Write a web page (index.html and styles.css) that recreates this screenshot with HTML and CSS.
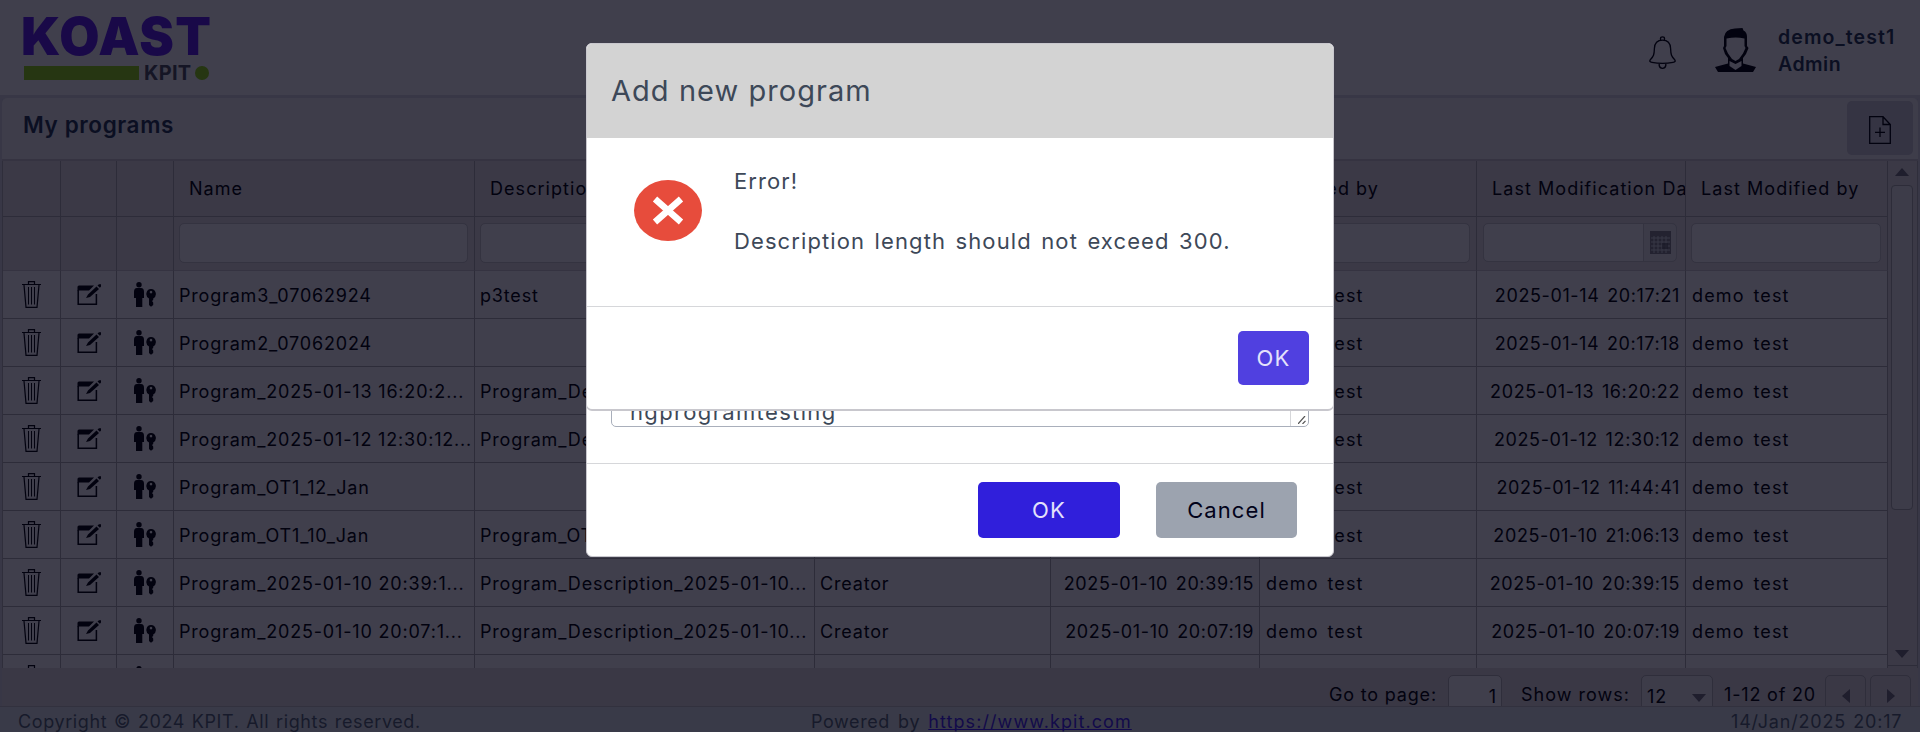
FILE: index.html
```html
<!DOCTYPE html>
<html lang="en">
<head>
<meta charset="utf-8">
<title>My programs</title>
<link rel="stylesheet" href="styles.css">
</head>
<body>
<svg class="defs" aria-hidden="true">
  <symbol id="trash" viewBox="0 0 19 27"><g fill="none" stroke="currentColor"><path d="M0 3.5H19M6.5 3V.7H12.5V3M2 4L4 26.4H15L17 4" stroke-width="1.2"/><path d="M6.5 6V23.500M9.500 6V23.500M12.500 6V23.500" stroke-width="1"/></g></symbol>
  <symbol id="edit" viewBox="0 0 24 22"><path d="M1.200 6V20.300H19.400V10" fill="none" stroke="currentColor" stroke-width="1.500"/><path d="M.5 3Q.5 1.500 2 1.500H17L12 6.500H.5ZM9 14L11 10.500L19.500 2.500L22 5L13 13ZM20.500 1.600L22 .2H24V2.500L22.900 3.800Z" fill="currentColor"/></symbol>
  <symbol id="access" viewBox="0 0 22 25"><g fill="currentColor"><circle cx="5" cy="2.700" r="2.700"/><path d="M3 6H7Q10 6 10 10V16H8.300V25H2V16H0V10Q0 6 3 6Z"/><path fill-rule="evenodd" d="M17 7a5 5 0 0 1 2.200 9.400V18L18 19L19.200 20.500V23L17 24.800L15 23V16.400A5 5 0 0 1 17 7ZM17 8.800a1.300 1.300 0 1 0 .01 0Z"/></g></symbol>
</svg>

<header class="topbar">
  <div class="logo">
    <div class="logo-name">KOAST</div>
    <div class="logo-sub"><i class="logo-bar"></i><b>KPIT</b><i class="logo-dot"></i></div>
  </div>
  <div class="user">
    <svg class="bell" viewBox="0 0 27 33" fill="none" stroke="currentColor" stroke-width="1.300"><path d="M11.500 4.500V2.500Q11.500.8 13.500.8T15.500 2.500V4.500M13.500 4.200C8 4.200 5.600 8 5.400 12.500C5.200 19 4.500 20.500 1.500 23.500C.2 25 .8 26 3 26.400C9 27.500 18 27.500 24 26.400C26.200 26 26.800 25 25.500 23.500C22.500 20.500 21.800 19 21.600 12.500C21.400 8 19 4.200 13.500 4.200ZM10.200 27.300V29.500Q10.800 32.300 13.500 32.300T16.800 29.500V27.300"/></svg>
    <svg class="avatar" viewBox="0 0 41 44"><path fill="currentColor" fill-rule="evenodd" d="M9 18V9Q10 1 20 .5L27.500 0L28.500 2.500Q32 4 32 9V18L33.500 20L31 26L28 30V35.500L41 39L38 44H3L0 39L13 35.500V30L10 26L8 20ZM11.500 10.500V18L10.500 20L13 25.500L17 31L20.500 33L24 31L28 25.500L30.500 20L29.500 18V10.500Q21 8.500 11.500 10.500ZM14.500 33V38L20.500 42L26.500 38V33L20.500 36Z"/></svg>
    <div class="user-text"><div class="user-name">demo_test1</div><div class="user-role">Admin</div></div>
  </div>
</header>

<main class="panel">
  <div class="panel-head">
    <h1>My programs</h1>
    <button class="add" aria-label="Add program"><svg viewBox="0 0 22 28" fill="none" stroke="currentColor" stroke-width="1.300"><path d="M.7.700H14L21.300 8.500V27.300H.7ZM14 .7V8.500H21.300M11 11.500V21M6 16.300H16"/></svg></button>
  </div>
  <div class="grid-wrap">
    <div class="grid" id="grid">
      <div class="row head"><span></span><span></span><span></span><span>Name</span><span>Description</span><span>Role</span><span>Creation Date</span><span>Created by</span><span>Last Modification Date</span><span>Last Modified by</span></div>
      <div class="row filter"><span></span><span></span><span></span><span><i></i></span><span><i></i></span><span><i></i></span><span><i></i></span><span><i></i></span><span><i class="date"><svg viewBox="0 0 21 23"><path class="cal" d="M0 0H21V23H0Z"/><path class="cal-lines" d="M1 7H20M1 11H20M1 15H20M1 19H20M4 5V22M8 5V22M12 5V22M16 5V22"/><path class="cal-day" d="M12 12H18V18H12Z"/></svg></i></span><span><i></i></span></div>
    </div>
    <div class="scroll"><b class="up"></b><i class="thumb"></i><b class="down"></b></div>
  </div>
  <div class="pager">
    <span class="go">Go to page:</span><span class="box page">1</span>
    <span class="show">Show rows:</span><span class="box rows">12<b class="down"></b></span>
    <span class="range">1-12 of 20</span><span class="box nav"><b class="left"></b></span><span class="box nav"><b class="right"></b></span>
  </div>
</main>
<footer class="footer"><span class="copy">Copyright © 2024 KPIT. All rights reserved.</span><span class="powered">Powered by <a href="#">https://www.kpit.com</a></span><span class="stamp">14/Jan/2025 20:17</span></footer>

<div class="dialog">
  <div class="dialog-body"><div class="textarea"><div class="ta-text">ngprogramtesting</div><div class="ta-bar"><svg viewBox="0 0 8 8" stroke="#555" stroke-width="1.200"><path d="M0 8L7 0M4.500 8L7.500 4.800"/></svg></div></div></div>
  <div class="dialog-foot"><button class="btn ok">OK</button><button class="btn cancel">Cancel</button></div>
</div>
<div class="alert">
  <div class="alert-head">Add new program</div>
  <div class="alert-body">
    <svg viewBox="0 0 68 61"><ellipse cx="34" cy="30.500" rx="34" ry="30.500" fill="#e74c3c"/><path d="M21 19L47 42M47 19L21 42" stroke="#fff" stroke-width="6.500"/></svg>
    <div class="message"><p class="m1">Error!</p><p class="m2">Description length should not exceed 300.</p></div>
  </div>
  <div class="alert-foot"><button class="btn small">OK</button></div>
</div>
<script src="app.js"></script>
</body>
</html>
```
FILE: styles.css
```css
* { box-sizing: border-box; }
body { margin: 0; width: 1920px; height: 732px; overflow: hidden; display: flex; flex-direction: column; background: #383746; color: #02020f; font-family: Inter, "Liberation Sans", sans-serif; font-size: 18px; letter-spacing: .82px; position: relative; }
.defs { position: absolute; width: 0; height: 0; }
button { border: 0; font: inherit; letter-spacing: inherit; padding: 0; }
p, h1 { margin: 0; font-weight: inherit; }

.topbar { height: 95px; flex: none; background: #403f4c; display: flex; justify-content: space-between; padding: 0 24px; }
.logo { width: 190px; padding-top: 12px; }
.logo-name { font-size: 52px; line-height: 50px; height: 53px; margin-left: -3px; font-weight: 900; color: #190948; letter-spacing: 1.2px; white-space: nowrap; }
.logo-sub { display: flex; align-items: center; height: 16px; color: #151525; }
.logo-sub b { font-size: 20px; line-height: 16px; font-weight: 700; margin: 0 3px 0 5px; width: 48px; letter-spacing: .3px; }
.logo-bar { width: 115px; height: 14px; background: #263612; }
.logo-dot { width: 14px; height: 14px; border-radius: 50%; background: #263612; }
.user { display: flex; align-items: flex-start; color: #02020f; }
.bell { width: 27px; height: 33px; margin: 36px 39px 0 0; }
.avatar { width: 41px; height: 44px; margin: 28px 22px 0 0; }
.user-text { width: 118px; padding-top: 24px; font-size: 19.5px; line-height: 27px; font-weight: 600; color: #0b0f22; white-space: nowrap; letter-spacing: 1.1px; }
.user-role { letter-spacing: .5px; }

.panel { margin: 3px 2px 0; height: 608px; flex: none; overflow: hidden; border-radius: 5px 5px 0 0; background: #3a3845; display: flex; flex-direction: column; }
.panel-head { height: 63px; flex: none; background: #3e3d4a; border-bottom: 2px solid #353341; display: flex; justify-content: space-between; padding: 3px 5px 0 21px; }
.panel-head h1 { font-size: 22.5px; font-weight: 600; line-height: 30px; padding-top: 9px; color: #0b0f22; letter-spacing: .6px; }
.add { width: 66px; height: 54px; border-radius: 5px; background: #353443; color: #02020f; display: flex; align-items: center; justify-content: center; }
.add svg { width: 22px; height: 28px; margin-top: 4px; }

.grid-wrap { display: flex; height: 507px; flex: none; border: solid #2f2e3b; border-width: 0 1px; }
.grid { width: 1885px; overflow: hidden; }
.row { display: grid; grid-template-columns: 58px 56px 57px 301px 340px 236px 209px 217px 209px 202px; height: 48px; }
.row > span { border: solid #2d2c39; border-width: 0 1px 1px 0; background: #403f4c; padding: 0 5px 0 5px; line-height: 50px; white-space: nowrap; overflow: hidden; display: block; }
.row.head { height: 56px; }
.row.head > span { background: #3b3946; line-height: 56px; padding-left: 15px; padding-right: 0; letter-spacing: 1.05px; }
.row.filter { height: 54px; }
.row.filter > span { background: #3b3946; padding: 6px 6px 0 5px; border-bottom-color: #353341; }
.filter i { display: block; height: 40px; border: 1px solid #343340; border-radius: 5px; background: #403f4c; }
.filter i.date { display: flex; justify-content: flex-end; padding-right: 5px; align-items: center; margin: 0 2px 0 1px; height: 39px; background: linear-gradient(90deg, #403f4c 159px, #343340 159px, #343340 160px, #3c3b48 160px); }
.date svg { width: 21px; height: 23px; }
.cal { fill: #232230; }
.cal-lines { stroke: #393846; stroke-width: 1; }
.cal-day { fill: #1a1928; opacity: .7; }
.row > .icon { display: flex; align-items: center; justify-content: center; padding: 0; }
.icon svg { display: block; }
.i-trash { width: 19px; height: 27px; }
.i-edit { width: 24px; height: 22px; }
.i-access { width: 22px; height: 25px; }
.row > .num { text-align: right; letter-spacing: .62px; word-spacing: 2px; }
.row > .who { letter-spacing: 1.15px; word-spacing: 2.5px; padding-left: 6px; }

.scroll { width: 29px; height: 505px; border-bottom: 1px solid #2d2c39; background: #3b3946; display: flex; flex-direction: column; align-items: center; padding: 7px 3px 7px 2px; }
.thumb { width: 22px; height: 325px; border: 1px solid #2d2c39; border-radius: 4px; background: #3d3c49; margin-top: 9px; }
.up, .down, .left, .right { width: 0; height: 0; border: 7px solid transparent; }
.up { border-top: 0; border-bottom: 8px solid #1f1e2d; }
.down { border-bottom: 0; border-top: 8px solid #1f1e2d; }
.scroll .down { margin-top: auto; }
.left { border-left: 0; border-right: 8px solid #1f1e2d; }
.right { border-right: 0; border-left: 8px solid #1f1e2d; }

.pager { height: 38px; flex: none; display: flex; align-items: flex-start; padding: 7px 7px 0 0; justify-content: flex-end; white-space: nowrap; line-height: 39px; overflow: hidden; }
.go { width: 119px; } .show { width: 120px; letter-spacing: 1px; } .range { width: 101px; }
.box { height: 42px; border: 1px solid #2f2e3b; border-radius: 5px; line-height: 42px; flex: none; }
.page { width: 54px; text-align: right; padding-right: 4px; background: #403f4c; margin-right: 19px; }
.rows { width: 72px; padding: 0 6px 0 5px; margin-right: 11px; display: flex; justify-content: space-between; background: #3d3c49; }
.rows .down { margin-top: 18px; }
.nav { width: 41px; display: flex; justify-content: center; padding-top: 13px; }
.nav + .nav { margin-left: 4px; }

.footer { height: 26px; flex: none; border-top: 1px solid #32313e; background: #393a48; color: #171a2b; display: grid; grid-template-columns: 793px 1fr 189px; padding-left: 18px; line-height: 29px; white-space: nowrap; letter-spacing: .6px; word-spacing: 1.2px; }
.footer a { color: #120a4a; letter-spacing: 1.08px; text-underline-offset: 1px; text-decoration-skip-ink: none; text-decoration-thickness: 1px; }
.powered { word-spacing: 2.5px; }
.stamp { letter-spacing: .82px; }

.dialog, .alert { position: absolute; left: 586px; top: 43px; width: 748px; border-radius: 6px; background: #fff; font-size: 22px; color: #3d4858; overflow: hidden; border: 1px solid #c8c7cd; letter-spacing: 1.1px; }
.dialog { height: 514px; }
.dialog-body { height: 420px; border-bottom: 1px solid #d6d7da; padding: 260px 24px 0; }
.textarea { height: 123px; border: 1px solid #a9afbb; border-radius: 5px; display: flex; justify-content: space-between; }
.ta-text { padding: 94px 0 0 18px; line-height: 26px; letter-spacing: 1.35px; }
.ta-bar { width: 18px; border-left: 1px solid #d6d7da; display: flex; align-items: flex-end; justify-content: flex-end; padding: 2px; }
.ta-bar svg { width: 8px; height: 8px; }
.dialog-foot { display: flex; justify-content: flex-end; gap: 36px; padding: 18px 36px 0 0; }
.btn { width: 142px; height: 56px; border-radius: 5px; background: #301fdb; color: #e4e2fb; }
.cancel { background: #9ca3af; color: #02021a; width: 141px; }
.small { width: 71px; height: 54px; background: #5040e0; }
.alert { height: 368px; border-bottom-width: 2px; }
.alert-head { height: 94px; background: #d3d3d3; font-size: 29px; line-height: 94px; padding-left: 24px; letter-spacing: 1.05px; white-space: nowrap; }
.alert-body { height: 169px; border-bottom: 1px solid #d6d7da; display: flex; padding: 42px 0 0 47px; }
.alert-body svg { width: 68px; height: 61px; flex: none; }
.message { margin: -14px 0 0 32px; line-height: 30px; white-space: nowrap; word-spacing: 2.200px; }
.message p + p { margin-top: 30px; }
.alert-foot { padding: 24px 24px 0 0; display: flex; justify-content: flex-end; }
```
FILE: app.js
```js
const programs = [
  ["Program3_07062924", "p3test", "2025-01-14 20:17:21"],
  ["Program2_07062024", "", "2025-01-14 20:17:18"],
  ["Program_2025-01-13 16:20:2...", "Program_Description_2025-01-13...", "2025-01-13 16:20:22"],
  ["Program_2025-01-12 12:30:12...", "Program_Description_2025-01-12...", "2025-01-12 12:30:12"],
  ["Program_OT1_12_Jan", "", "2025-01-12 11:44:41"],
  ["Program_OT1_10_Jan", "Program_OT1_10_Jan", "2025-01-10 21:06:13"],
  ["Program_2025-01-10 20:39:1...", "Program_Description_2025-01-10...", "2025-01-10 20:39:15"],
  ["Program_2025-01-10 20:07:1...", "Program_Description_2025-01-10...", "2025-01-10 20:07:19"],
  ["", "", ""]
];
const icon = n => `<span class="icon"><svg class="i-${n}"><use href="#${n}"/></svg></span>`;
const grid = document.getElementById("grid");
for (const [name, desc, date] of programs) {
  const who = date ? "demo test" : "", role = date ? "Creator" : "";
  grid.insertAdjacentHTML("beforeend", `<div class="row">${icon("trash")}${icon("edit")}${icon("access")}<span>${name}</span><span>${desc}</span><span>${role}</span><span class="num">${date}</span><span class="who">${who}</span><span class="num">${date}</span><span class="who">${who}</span></div>`);
}
```
